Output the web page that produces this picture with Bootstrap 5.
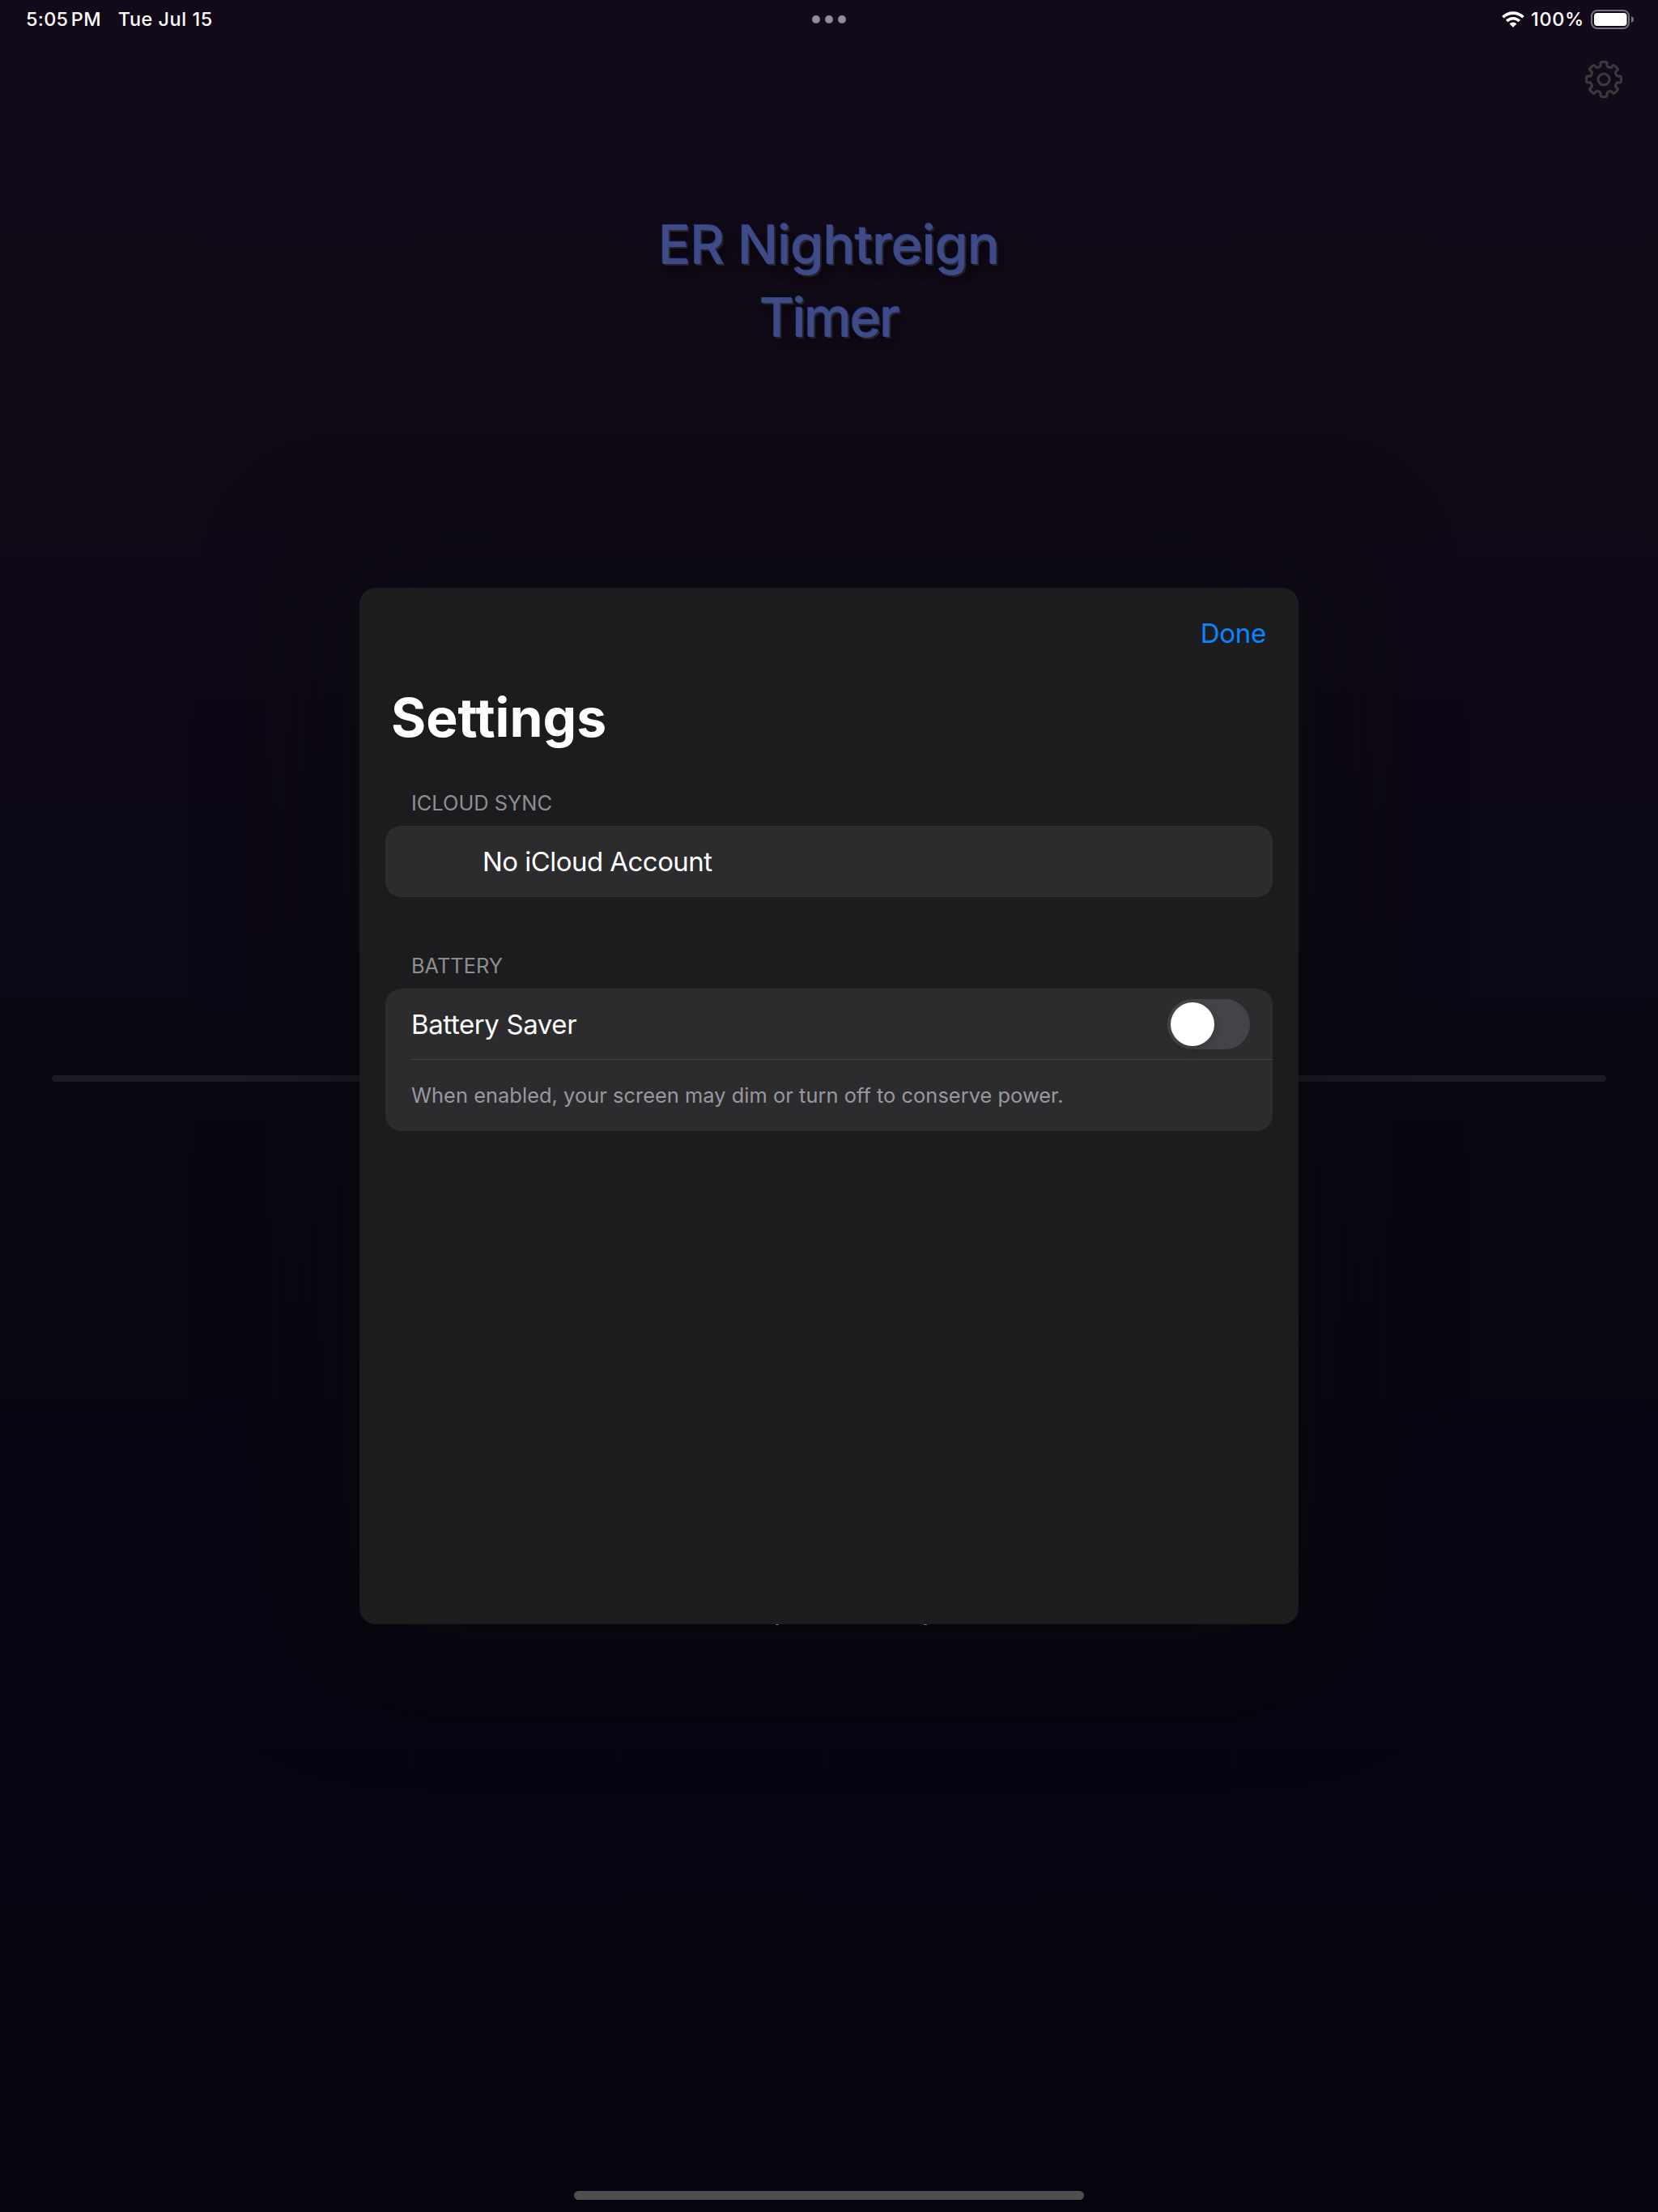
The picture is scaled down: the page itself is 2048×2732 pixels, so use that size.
<!DOCTYPE html>
<html lang="en" data-bs-theme="dark">
<head>
<meta charset="utf-8">
<meta name="viewport" content="width=device-width, initial-scale=1">
<title>ER Nightreign Timer</title>
<link href="https://cdn.jsdelivr.net/npm/bootstrap@5.3.0/dist/css/bootstrap.min.css" rel="stylesheet">
<style>
html,body{height:100%}
body{font-family:Inter,"Liberation Sans",sans-serif;color:#fff;background:#06040e;overflow:hidden}
.screen{height:2732px;width:2048px;background:linear-gradient(180deg,#130a19 0%,#110a17 15%,#0e0816 32%,#0a0713 50%,#070511 75%,#05040f 100%)}
.status{height:48px;padding:0 29px 0 31px;font-size:23.4px;font-weight:500;line-height:48px}
.status>div{flex:1 1 0}
.clock{letter-spacing:.3px;word-spacing:-3px;margin:0 21px 0 1px}
.day{letter-spacing:.55px}
.pct{letter-spacing:.7px}
.multi{gap:6px;padding-right:2px}
.multi i{width:10px;height:10px;border-radius:50%;background:#95899d}
.batt{margin-left:8px}
.gear-row{height:100px;padding:26px 43px 0 0}
.app-title{font-size:66px;font-weight:500;line-height:90px;letter-spacing:-.7px;color:#3e4b87;margin:109px 0 891px;text-shadow:-1px -1px 0 #2a3f8c,2px 2px 0 #24212d,3px 8px 14px rgba(0,0,0,.75)}
.second-line{letter-spacing:-2.2px}
.track{height:8px;border-radius:4px;background:#1e1b24;margin:0 64px}
.home{width:630px;height:11px;border-radius:6px;background:#4e4e4e;margin-bottom:15px}
.sheet{left:444px;top:726px;width:1160px;height:1280px;border-radius:20px;background:#1c1c1e;box-shadow:0 0 160px 20px rgba(9,12,11,.7)}
.sheet::after{content:"";position:absolute;left:514px;top:1280px;width:4px;height:1px;background:#69696c;box-shadow:183px 0 0 #69696c}
.sheet-bar{height:113px;padding:0 40px}
.done{color:#0a84ff;font-size:33px;letter-spacing:-.3px;text-decoration:none}
.sheet h1{font-size:66px;font-weight:700;line-height:80px;letter-spacing:.01px;margin:7px 0 50px 39px}
.group-label{font-size:25.4px;line-height:32px;color:#8e8e93;padding-left:64px;margin-bottom:12px}
.rows{margin:0 32px 69px;border-radius:20px;background:#2c2c2e}
.rowline{height:87px;font-size:33px;padding:0 28px 0 32px}
.account{height:88px;padding:2px 0 0 120px;letter-spacing:-.55px}
.saver{letter-spacing:-.4px;padding-top:2px}
.sep{height:1px;background:#434346;margin-left:32px}
.note{height:88px;padding-left:32px;font-size:25.4px;letter-spacing:.04px;color:#98989f}
.toggle{width:102px;height:62px;border-radius:31px;padding:4px;background:#444347}
.toggle i{width:54px;height:54px;border-radius:50%;background:#fff;box-shadow:2px 4px 10px rgba(0,0,0,.18)}
</style>
<script src="https://cdn.jsdelivr.net/npm/bootstrap@5.3.0/dist/js/bootstrap.bundle.min.js"></script>
</head>
<body>
<div class="screen d-flex flex-column position-relative overflow-hidden">
  <header class="status d-flex align-items-center">
    <div class="d-flex"><span class="clock">5:05 PM</span><span class="day">Tue Jul 15</span></div>
    <div class="multi d-flex justify-content-center"><i></i><i></i><i></i></div>
    <div class="d-flex justify-content-end align-items-center">
      <svg width="28" height="20" viewBox="0 0 28 20" class="me-2"><g fill="none" stroke="#fff" stroke-width="3.7"><path d="M1.5 7.2a17.7 17.7 0 0 1 25 0"/><path d="M6.2 12a11 11 0 0 1 15.6 0"/></g><path d="M9.6 15.4a6.2 6.2 0 0 1 8.8 0L14 19.8z" fill="#fff"/></svg>
      <span class="pct">100%</span>
      <svg class="batt" width="54" height="24" viewBox="0 0 54 24"><rect x="1" y="1" width="46" height="22" rx="7" fill="none" stroke="#77707d" stroke-width="2"/><rect x="4" y="4" width="40.5" height="16" rx="4" fill="#fff"/><path d="M50 8c4 1.300 4 6.700 0 8z" fill="#77707d"/></svg>
    </div>
  </header>
  <div class="gear-row d-flex justify-content-end align-items-start">
    <svg width="48" height="48" viewBox="-24 -24 48 48" fill="none" stroke="#3a393c" stroke-width="3.1" stroke-linejoin="round"><circle r="7"/><path id="gearPath"/></svg>
  </div>
  <h2 class="app-title text-center">ER Nightreign<br><span class="second-line">Timer</span></h2>
  <div class="track"></div>
  <div class="mt-auto d-flex justify-content-center"><div class="home"></div></div>

  <main class="sheet position-absolute">
    <div class="sheet-bar d-flex justify-content-end align-items-center"><a class="done" href="#">Done</a></div>
    <h1>Settings</h1>
    <section>
      <div class="group-label">ICLOUD SYNC</div>
      <div class="rows"><div class="rowline account d-flex align-items-center">No iCloud Account</div></div>
    </section>
    <section>
      <div class="group-label">BATTERY</div>
      <div class="rows">
        <div class="rowline d-flex align-items-center justify-content-between"><span class="saver">Battery Saver</span><div class="toggle d-flex"><i></i></div></div>
        <div class="sep"></div>
        <div class="note d-flex align-items-center">When enabled, your screen may dim or turn off to conserve power.</div>
      </div>
    </section>
  </main>
</div>
<script>
// Outline of an eight-toothed cog, centred on the origin.
let d='';
for(let k=0;k<8;k++){
  const p=(r,a)=>{const t=(k*45+a)*Math.PI/180;return (r*Math.sin(t)).toFixed(2)+' '+(-r*Math.cos(t)).toFixed(2)};
  d+=(k?'L':'M')+p(16.6,-16)+'Q'+p(17,-13)+' '+p(18,-12.5)+'L'+p(20.6,-11)+'Q'+p(21.6,-10.5)+' '+p(21.6,-7)+'L'+p(21.6,7)+'Q'+p(21.6,10.5)+' '+p(20.6,11)+'L'+p(18,12.5)+'Q'+p(17,13)+' '+p(16.6,16)+'Q'+p(16,22.5)+' '+p(16.6,29);
}
document.getElementById('gearPath').setAttribute('d',d+'Z');
</script>
</body>
</html>
